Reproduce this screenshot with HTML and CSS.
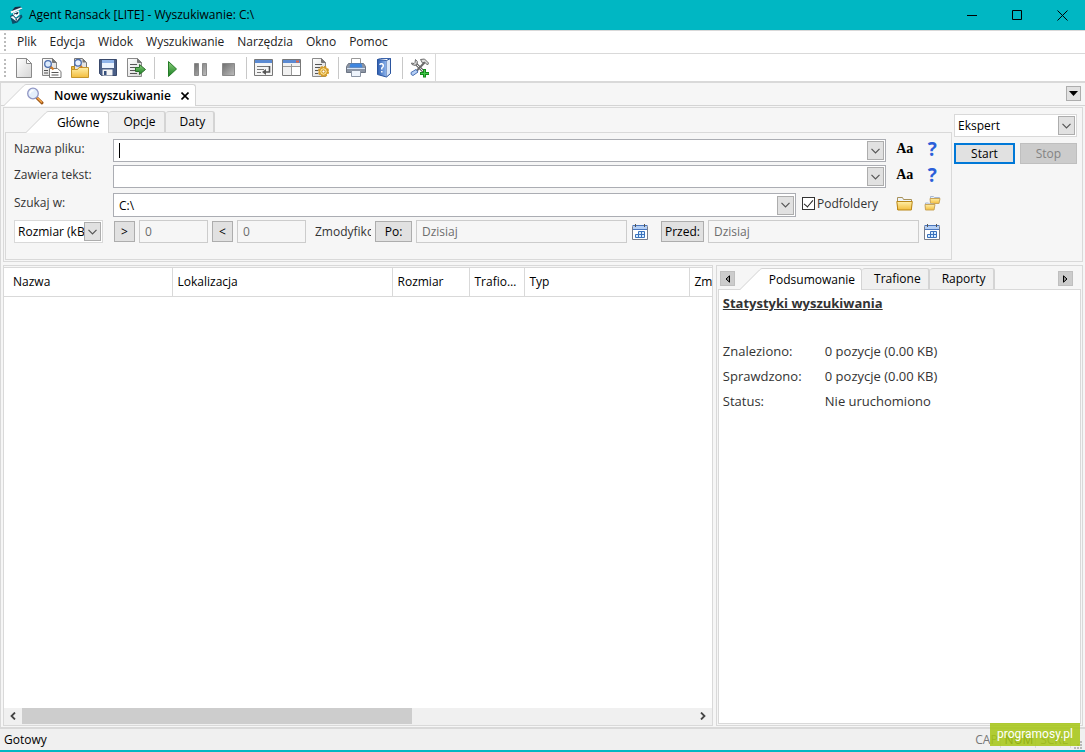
FILE: index.html
```html
<!DOCTYPE html>
<html lang="pl">
<head>
  <meta charset="UTF-8" />
  <meta name="viewport" content="width=device-width, initial-scale=1.0"/>
  <title>Agent Ransack</title>
  <link rel="stylesheet" href="styles.css">
</head>
<body>
  <svg class="defs" aria-hidden="true">
    <defs>
      <linearGradient id="gPage" x1="0" y1="0" x2="1" y2="1"><stop offset="0" stop-color="#fff"/><stop offset="1" stop-color="#d5d5d5"/></linearGradient>
      <linearGradient id="gFolder" x1="0" y1="0" x2="0" y2="1"><stop offset="0" stop-color="#ffefa8"/><stop offset="1" stop-color="#f3bd3c"/></linearGradient>
      <linearGradient id="gGreen" x1="0" y1="0" x2="0" y2="1"><stop offset="0" stop-color="#8ed07c"/><stop offset="1" stop-color="#177f22"/></linearGradient>
      <linearGradient id="gGray" x1="0" y1="0" x2="1" y2="1"><stop offset="0" stop-color="#6e6e6e"/><stop offset="1" stop-color="#bdbdbd"/></linearGradient>
      <linearGradient id="gBlue" x1="0" y1="0" x2="1" y2="0"><stop offset="0" stop-color="#2b5cb0"/><stop offset="1" stop-color="#8fb6ee"/></linearGradient>
      <symbol id="chevron" viewBox="0 0 9 6"><path d="M.5 .8 4.5 4.8 8.5 .8" fill="none" stroke="#555" stroke-width="1.2"/></symbol>
      <symbol id="slope" viewBox="0 0 22 22"><path d="M0 22 20 2Q21 .5 22 .5V22Z" fill="#fff"/><path d="M0 21.5 19.5 2Q21 .5 22 .5" fill="none" stroke="#d4d4d4"/></symbol>
      <symbol id="calendar" viewBox="0 0 16 16">
        <path d="M.5 2.5h15v13H.5z" fill="#fff" stroke="#777d8b"/><path d="M1 2h14v3H1z" fill="#b4cff5"/><path d="M.5 1.500h15M1 5.500h14" stroke="#4a76bd"/>
        <path d="M3.500 0v3M12.500 0v3" stroke="#555"/>
        <path d="M6.500 7.500h6v6h-9v-3h3z" fill="#d6ebff"/><path d="M6.500 7.500h6v6h-9v-3h9M6.500 7.500v6M9.500 7.500v6" fill="none" stroke="#3a72bd"/>
      </symbol>
      <symbol id="lens" viewBox="0 0 18 18">
        <path d="m11 11 5 4.800" stroke="#9b5414" stroke-width="3" stroke-linecap="round"/><path d="m11.500 11 4 4" stroke="#f4a54a" stroke-width="1.600" stroke-linecap="round"/>
        <circle cx="7" cy="6.500" r="5.300" fill="#e4effc" stroke="#9096c4" stroke-width="1.300"/><path d="M4 6.500Q4.500 3.500 7.500 3.500" stroke="#fff" stroke-width="1.500" fill="none"/>
      </symbol>
    </defs>
  </svg>

  <div class="window">
    <header class="titlebar">
      <svg class="app-icon" viewBox="0 0 16 18">
        <path d="M4 4.500 7 1l5.500-.5L14 3 5 6.500z" fill="#1b2c44"/><path d="m2.500 5.500 10.500-4 1.500 1L3.500 7.500z" fill="#f3f8fb"/>
        <path d="m5 7 6-2.500.5 4L8 11.500 5 10z" fill="#fff"/><path d="m5.500 7.800 5-2-.5 2.200-1.800.5-.8-.7-1.400.9z" fill="#17324f"/>
        <path d="m2 10 3-1.500 3 3.500 5.500-3.500 1 2.500-5 5.500-5 1.500z" fill="#0c4d69"/><path d="m2.500 11 2.500-1 3 3 4.500-3-4 5.500z" fill="#eef8fa"/><path d="m7.500 13 1.500 0-1 3.500z" fill="#12304a"/>
      </svg>
      <h1 class="title">Agent Ransack [LITE] - Wyszukiwanie: C:\</h1>
      <button class="win-btn" aria-label="Minimalizuj"><svg width="11" height="11"><path d="M0 5.500h10" stroke="#000"/></svg></button>
      <button class="win-btn" aria-label="Maksymalizuj"><svg width="11" height="11"><path d="M.5 .5h9v9h-9z" fill="none" stroke="#000"/></svg></button>
      <button class="win-btn" aria-label="Zamknij"><svg width="11" height="11"><path d="m.5 .5 10 10M10.500 .5l-10 10" stroke="#000"/></svg></button>
    </header>

    <nav class="menubar">
      <span class="handle"></span>
      <a href="#">Plik</a>
      <a href="#">Edycja</a>
      <a href="#">Widok</a>
      <a href="#">Wyszukiwanie</a>
      <a href="#">Narzędzia</a>
      <a href="#">Okno</a>
      <a href="#">Pomoc</a>
    </nav>

    <div class="toolbar-row">
      <div class="toolbar">
        <span class="handle"></span>
        <button aria-label="Nowy"><svg viewBox="0 0 20 20"><path d="M2.500 .5h10l5 5v14h-15z" fill="url(#gPage)" stroke="#8a8a8a"/><path d="M12.500 .5v5h5z" fill="#fff" stroke="#8a8a8a"/></svg></button>
        <button aria-label="Nowe wyszukiwanie"><svg viewBox="0 0 20 20"><path d="M.5 .5h10l4 4v13H.5z" fill="url(#gPage)" stroke="#858585"/><path d="M10.500 .5v4h4" fill="#777" stroke="#777"/><path d="M2 12.500h4M2 15h4" stroke="#555"/><path d="M7.500 10.500h8l3.500 3v6H7.500z" fill="#fff" stroke="#777"/><path d="M9.500 14.500h7M9.500 17h7" stroke="#555"/><path d="m8.500 8.500 3 3" stroke="#d47a22" stroke-width="2"/><circle cx="6" cy="6" r="3.300" fill="#dcebfd" stroke="#4c6eae" stroke-width="1.300"/></svg></button>
        <button aria-label="Otwórz"><svg viewBox="0 0 20 20"><path d="M4.500 .5h8l4 4v8h-12z" fill="#e4e4e4" stroke="#777"/><path d="M12.500 .5v4h4" fill="#777"/><path d="M1.500 18.500v-10h3v3h13v7z" fill="#e9b942" stroke="#b98a20"/><path d="M1.500 19.500v-8h6l1.500-2h9.500v10z" fill="url(#gFolder)" stroke="#c4952a"/><path d="m10 7 2 2.500" stroke="#d47a22" stroke-width="2"/><circle cx="8" cy="4.800" r="3.300" fill="#e7f1ff" stroke="#4c6eae" stroke-width="1.300"/></svg></button>
        <button aria-label="Zapisz"><svg viewBox="0 0 20 20"><path d="M1.500 1.500h17v16h-15l-2-2z" fill="#4a5f88" stroke="#39496b"/><path d="M4 2h12v8H4z" fill="#eaf3ff"/><path d="M4 2h12v3H4z" fill="#8fb4ea"/><path d="M4.500 11.500h10v6h-10z" fill="#f4f4f4"/><path d="M6 13h2.500v4H6z" fill="#36507d"/></svg></button>
        <button aria-label="Eksportuj"><svg viewBox="0 0 20 20"><path d="M1.500 .5h10l4 4v14h-14z" fill="url(#gPage)" stroke="#8a8a8a"/><path d="M11.500 .5v4h4" fill="#777" stroke="#777"/><path d="M4 6.500h7M4 9.500h6M4 12.500h6M4 15.500h7" stroke="#555"/><path d="M9.500 9.500h4v-3l6 5-6 5v-3h-4z" fill="url(#gGreen)" stroke="#2c6f2c"/></svg></button>
        <span class="sep"></span>
        <button aria-label="Start"><svg viewBox="0 0 20 20"><path d="M6.500 3.500v15l8-7.500z" fill="url(#gGreen)" stroke="#257a28"/></svg></button>
        <button aria-label="Pauza"><svg viewBox="0 0 20 20"><path d="M4.500 5.500h4v12h-4zM12.500 5.500h4v12h-4z" fill="url(#gGray)" stroke="#8a8a8a"/></svg></button>
        <button aria-label="Zatrzymaj"><svg viewBox="0 0 20 20"><path d="M4.500 5.500h12v12h-12z" fill="url(#gGray)" stroke="#8a8a8a"/></svg></button>
        <span class="sep"></span>
        <button aria-label="Zawijaj wiersze"><svg viewBox="0 0 20 20"><path d="M.5 1.500h18v16H.5z" fill="#f5f5f5" stroke="#777"/><path d="M1 2h17v3H1z" fill="#5b8ad2"/><path d="M3 8.500h12M3 11.500h7M3 14.500h4" stroke="#777"/><path d="M15.500 8v6h-4" fill="none" stroke="#555" stroke-width="1.600"/><path d="m12 11-4 3 4 3z" fill="#555"/></svg></button>
        <button aria-label="Układ okna"><svg viewBox="0 0 20 20"><path d="M.5 1.500h18v16H.5z" fill="#f1f1f1" stroke="#777"/><path d="M1 2h17v3H1z" fill="#5b8ad2"/><path d="M14 2.500h3v2h-3z" fill="#e46746"/><path d="M1 8.500h17M9.500 6v11.500" stroke="#999"/><path d="M10 9h8v8h-8z" fill="#fff"/></svg></button>
        <button aria-label="Opcje"><svg viewBox="0 0 20 20"><path d="M2.500 .5h9l4 4v14h-13z" fill="url(#gPage)" stroke="#8a8a8a"/><path d="M11.500 .5v4h4" fill="#777" stroke="#777"/><path d="M5 6.500h7M5 9.500h5M5 12.500h3M5 15.500h3" stroke="#555"/><circle cx="13.500" cy="13.500" r="4.600" fill="#f9dc7c" stroke="#d59a24" stroke-width="2" stroke-dasharray="2.400 1.200"/><circle cx="13.500" cy="13.500" r="3.900" fill="#fbe08a" stroke="#c98d1c"/><circle cx="13.500" cy="13.500" r="1.600" fill="#fff" stroke="#c98d1c"/></svg></button>
        <span class="sep"></span>
        <button aria-label="Drukuj"><svg viewBox="0 0 20 20"><path d="M5.500 .5h9v6h-9z" fill="#fff" stroke="#999"/><path d="M2.500 5.500h15l2 3v6H.5v-6z" fill="#8c95a4" stroke="#6c7584"/><path d="M4.500 5.500h11l1 4h-13z" fill="#3f86df"/><path d="M1 10.500h18" stroke="#d5e3f6"/><path d="M5.500 12.500h9v6h-9z" fill="#eef4fc" stroke="#8b95a5"/></svg></button>
        <button aria-label="Pomoc"><svg viewBox="0 0 20 20"><path d="m3.500 1.500 3-1h10v15l-4 3z" fill="#fff" stroke="#3c65ab"/><path d="M3.500 1.500 12.500 2.500v16.500l-9-2.500z" fill="url(#gBlue)" stroke="#2b559f"/><path d="m12.500 2.500 4-2v15l-4 3.500" fill="#dbe7f8" stroke="#2b559f"/><path d="M6 7Q6 5.500 7.700 5.700T9.300 8Q9.300 9 7.800 10v1.500M7.800 13v1.500" fill="none" stroke="#fff" stroke-width="1.500"/></svg></button>
        <span class="sep"></span>
        <button aria-label="Dodaj narzędzie"><svg viewBox="0 0 20 20"><path d="m5 5 9 9" stroke="#6c6c6c" stroke-width="3"/><path d="m5 5 9 9" stroke="#eee"/><path d="M5.500 1.500Q8.500 3.500 7 6T2 6.500L1.500 5l2.500.5 1-1z" fill="#ddd" stroke="#6c6c6c"/><path d="m15 4-8.500 9" stroke="#6c6c6c" stroke-width="2"/><path d="m10.500 1.500 4-.5 4 4-1 2-3-3-2 1z" fill="#ddd" stroke="#6c6c6c"/><path d="m6 11.500-5 3q-.5 2.500 2 3l5-3.500z" fill="#b4cef5" stroke="#4970b3"/><path d="M14.500 11v8.500M10 15.500h9" stroke="#138a1b" stroke-width="3"/><path d="M14.500 12v6.500M11 15.500h7.500" stroke="#43c84a"/></svg></button>
      </div>
    </div>

    <main class="workspace">
      <div class="doc-tabs">
        <div class="doc-tab">
          <svg class="slope"><use href="#slope"/></svg>
          <div class="doc-tab-body">
            <svg class="lens"><use href="#lens"/></svg>
            <button class="doc-name">Nowe wyszukiwanie</button>
            <button class="doc-close" aria-label="Zamknij kartę"><svg width="8" height="8"><path d="m.5 .5 7 7m0-7-7 7" stroke="#000" stroke-width="1.600"/></svg></button>
          </div>
        </div>
        <button class="tab-list" aria-label="Lista kart"><svg width="9" height="5"><path d="M0 0h9L4.500 5z"/></svg></button>
      </div>

      <section class="search-pane">
        <div class="criteria">
          <div class="tabs">
            <div class="tab active"><svg class="slope"><use href="#slope"/></svg><button>Główne</button></div>
            <div class="tab"><button>Opcje</button></div>
            <div class="tab"><button>Daty</button></div>
          </div>
          <form class="form">
            <div class="row">
              <label class="caption" for="fileName">Nazwa pliku:</label>
              <div class="combo">
                <span class="caret"></span>
                <input id="fileName" type="text">
                <button type="button" class="drop" aria-label="Rozwiń"><svg><use href="#chevron"/></svg></button>
              </div>
              <div class="aside">
                <button type="button" class="case">Aa</button>
                <button type="button" class="help">?</button>
              </div>
            </div>
            <div class="row">
              <label class="caption" for="contains">Zawiera tekst:</label>
              <div class="combo">
                <input id="contains" type="text">
                <button type="button" class="drop" aria-label="Rozwiń"><svg><use href="#chevron"/></svg></button>
              </div>
              <div class="aside">
                <button type="button" class="case">Aa</button>
                <button type="button" class="help">?</button>
              </div>
            </div>
            <div class="row">
              <label class="caption" for="lookIn">Szukaj w:</label>
              <div class="combo">
                <input id="lookIn" type="text" value="C:\">
                <button type="button" class="drop" aria-label="Rozwiń"><svg><use href="#chevron"/></svg></button>
              </div>
              <label class="check"><input type="checkbox" checked>Podfoldery</label>
              <div class="aside folders">
                <button type="button" aria-label="Wybierz folder"><svg width="17" height="15" viewBox="0 0 17 15"><path d="M1.500 13.500v-12h5l1 2h8v8z" fill="#eef4fb" stroke="#a9925a"/><path d="M1.500 5v8.500" stroke="#b98718"/><path d="M.8 5.500h15.500l-1 8.500H1.800z" fill="url(#gFolder)" stroke="#b98718"/></svg></button>
                <button type="button" aria-label="Wybierz foldery"><svg width="17" height="16" viewBox="0 0 17 16"><path d="M6.500 7.500v-6h3l1 1h5v3z" fill="#e5eefb" stroke="#a9b9d3"/><path d="M6 3.500h10l-1 5H6.500z" fill="url(#gFolder)" stroke="#c9a55a"/><path d="M1.500 14v-6h3l1 1h4v4z" fill="#e5eefb" stroke="#a9b9d3"/><path d="M1 9.500h10l-1 5.500H1.500z" fill="url(#gFolder)" stroke="#c9a55a"/></svg></button>
              </div>
            </div>
            <div class="row filters">
              <div class="picker unit">
                <select aria-label="Jednostka"><option>Rozmiar (kB)</option></select>
                <span class="drop"><svg><use href="#chevron"/></svg></span>
              </div>
              <button type="button" class="push sign">&gt;</button>
              <input class="field size" type="text" value="0" aria-label="Rozmiar od" disabled>
              <button type="button" class="push sign">&lt;</button>
              <input class="field size" type="text" value="0" aria-label="Rozmiar do" disabled>
              <span class="modified">Zmodyfikowany</span>
              <button type="button" class="push after">Po:</button>
              <input class="field" type="text" value="Dzisiaj" aria-label="Po dacie" disabled>
              <button type="button" class="cal" aria-label="Kalendarz"><svg><use href="#calendar"/></svg></button>
              <button type="button" class="push before">Przed:</button>
              <input class="field" type="text" value="Dzisiaj" aria-label="Przed datą" disabled>
              <button type="button" class="cal last" aria-label="Kalendarz"><svg><use href="#calendar"/></svg></button>
            </div>
          </form>
        </div>
        <div class="actions">
          <div class="picker">
            <select aria-label="Tryb"><option>Ekspert</option></select>
            <span class="drop"><svg><use href="#chevron"/></svg></span>
          </div>
          <div class="buttons">
            <button class="push start">Start</button>
            <button class="push stop" disabled>Stop</button>
          </div>
        </div>
      </section>

      <div class="panes">
        <section class="results">
          <div class="list">
            <table>
              <colgroup><col class="c-name"><col class="c-place"><col class="c-size"><col class="c-hits"><col class="c-type"><col class="c-date"></colgroup>
              <thead>
                <tr><th>Nazwa</th><th>Lokalizacja</th><th>Rozmiar</th><th>Trafione</th><th>Typ</th><th>Zmodyfikowany</th></tr>
              </thead>
            </table>
          </div>
          <div class="scrollbar">
            <button aria-label="W lewo"><svg width="6" height="8"><path d="M5 .5 1.500 4 5 7.500" fill="none" stroke="#444" stroke-width="1.800"/></svg></button>
            <div class="track"><div class="thumb"></div></div>
            <button aria-label="W prawo"><svg width="6" height="8"><path d="M1 .5 4.500 4 1 7.500" fill="none" stroke="#444" stroke-width="1.800"/></svg></button>
          </div>
        </section>
        <section class="details">
          <div class="tabs">
            <button class="arrow" aria-label="Poprzednia"><svg width="5" height="8"><path d="M4.500 .8v6.400L1 4z" fill="#999" stroke="#000"/></svg></button>
            <div class="tab active"><svg class="slope"><use href="#slope"/></svg><button>Podsumowanie</button></div>
            <div class="tab"><button>Trafione</button></div>
            <div class="tab"><button>Raporty</button></div>
            <button class="arrow right" aria-label="Następna"><svg width="5" height="8"><path d="M.5 .8v6.400L4 4z" fill="#999" stroke="#000"/></svg></button>
          </div>
          <div class="summary">
            <h2>Statystyki wyszukiwania</h2>
            <dl>
              <dt>Znaleziono:</dt><dd>0 pozycje (0.00 KB)</dd>
              <dt>Sprawdzono:</dt><dd>0 pozycje (0.00 KB)</dd>
              <dt>Status:</dt><dd>Nie uruchomiono</dd>
            </dl>
          </div>
        </section>
      </div>
    </main>

    <footer class="statusbar">
      <span class="ready">Gotowy</span>
      <span class="key">CAP</span>
      <span class="key on">NUM</span>
      <span class="key">SCRL</span>
      <svg class="grip" width="9" height="9"><path d="M6 0h2v2H6zM3 3h2v2H3zM6 3h2v2H6zM0 6h2v2H0zM3 6h2v2H3zM6 6h2v2H6z" fill="#b8b8b8"/></svg>
      <span class="badge">programosy.pl</span>
    </footer>
  </div>
</body>
</html>
```
FILE: styles.css
```css
* {
  box-sizing: border-box;
}
body {
  margin: 0;
  font-family: "Open Sans", "Noto Sans", sans-serif;
  font-size: 12px;
  line-height: 16px;
  color: #000;
}
button, input, select {
  font: inherit;
  color: inherit;
  margin: 0;
  padding: 0;
  border: none;
  background: none;
  border-radius: 0;
  min-width: 0;
}
button {
  display: flex;
  align-items: center;
  justify-content: center;
}
input:focus, select:focus {
  outline: none;
}
.defs {
  position: absolute;
  width: 0;
  height: 0;
}
.window {
  display: flex;
  flex-direction: column;
  min-height: 100vh;
  background: #f6f6f6;
  border-bottom: 2px solid #00b7c3;
}

/* title and menu */
.titlebar {
  display: flex;
  align-items: center;
  height: 30px;
  padding-left: 8px;
  background: #00b7c3;
}
.app-icon {
  width: 16px;
  height: 18px;
  margin-right: 5px;
}
.title {
  flex: 1;
  margin: 0;
  font-size: 12px;
  font-weight: normal;
}
.win-btn {
  width: 45px;
  height: 30px;
}
.menubar {
  display: flex;
  align-items: center;
  height: 24px;
  padding-left: 4px;
  background: #fff;
  border-top: 1px solid #d9d9d9;
  border-bottom: 1px solid #d9d9d9;
}
.menubar a {
  padding: 0 7px 0 6px;
  color: #222;
  text-decoration: none;
}
.handle {
  width: 2px;
  height: 18px;
  margin-right: 4px;
  background: repeating-linear-gradient(#bbb 0 2px, transparent 2px 4px);
}
.menubar .handle {
  margin-right: 5px;
}

/* toolbar */
.toolbar-row {
  display: flex;
  height: 29px;
  background: #fff;
  border-bottom: 2px solid #d9d9d9;
}
.toolbar {
  display: flex;
  align-items: center;
  padding: 0 1px 0 4px;
  border-right: 1px solid #d9d9d9;
}
.toolbar button {
  width: 28px;
  height: 26px;
}
.toolbar button svg {
  width: 20px;
  height: 20px;
}
.sep {
  width: 1px;
  height: 22px;
  margin: 0 3px 0 4px;
  background: #c8c8c8;
}

/* document tab */
.workspace {
  flex: 1;
  display: flex;
  flex-direction: column;
  border-left: 1px solid #d9d9d9;
  border-bottom: 2px solid #d9d9d9;
  padding-bottom: 1px;
}
.doc-tabs {
  display: flex;
  align-items: flex-end;
  height: 23px;
  padding-left: 3px;
  border-bottom: 1px solid #d4d4d4;
}
.doc-tab {
  display: flex;
  margin-bottom: -1px;
}
.slope {
  width: 22px;
  height: 22px;
  flex: none;
}
.doc-tab-body {
  display: flex;
  align-items: center;
  height: 22px;
  padding-right: 6px;
  background: #fff;
  border: solid #d4d4d4;
  border-width: 1px 1px 0 0;
  border-radius: 0 3px 0 0;
}
.lens {
  width: 18px;
  height: 18px;
  margin-right: 10px;
}
.doc-name {
  font-weight: 600;
  margin-right: 10px;
}
.tab-list {
  width: 15px;
  height: 15px;
  margin: 0 4px 4px auto;
  background: #e1e1e1;
  border: 1px solid #adadad;
}

/* search form */
.search-pane {
  display: flex;
  margin: 1px 2px 3px;
  padding: 3px 5px 1px 1px;
  border: 1px solid #d9d9d9;
}
.criteria {
  flex: 1;
  min-width: 0;
}
.tabs {
  display: flex;
  align-items: flex-end;
  position: relative;
}
.criteria .tabs {
  padding-left: 21px;
}
.tab {
  display: flex;
}
.tab button {
  height: 21px;
  padding: 0 8px 0 14px;
  background: #f0f0f0;
  border: solid #d4d4d4;
  border-width: 1px 2px 0 0;
  border-radius: 3px 3px 0 0;
}
.tab.active {
  margin-bottom: -1px;
}
.tab.active button {
  height: 22px;
  padding: 0 9px;
  background: #fff;
  border-right-width: 1px;
  border-radius: 0 3px 0 0;
}
.form {
  display: flex;
  flex-direction: column;
  gap: 3px;
  height: 128px;
  padding: 6px 5px 0 8px;
  border: 1px solid #d9d9d9;
}
.row {
  display: flex;
  align-items: center;
  height: 23px;
}
.row:nth-child(3) {
  height: 24px;
  margin-top: 2px;
}
.caption {
  width: 99px;
  align-self: flex-start;
  padding-top: 2px;
  color: #333;
}
.combo {
  flex: 1;
  display: flex;
  align-items: center;
  height: 100%;
  padding: 0 1px 0 5px;
  background: #fff;
  border: 1px solid #abadb3;
}
.combo input {
  flex: 1;
  height: 18px;
}
.caret {
  width: 1px;
  height: 15px;
  background: #000;
}
.drop {
  display: flex;
  align-items: center;
  justify-content: center;
  width: 17px;
  height: 19px;
  background: #e1e1e1;
  border: 1px solid #adadad;
}
.drop svg {
  width: 9px;
  height: 6px;
}
.aside {
  display: flex;
  width: 60px;
  padding: 0 0 4px 5px;
}
.aside button {
  flex: 1;
  height: 20px;
}
.case {
  font-family: "Liberation Serif", serif;
  font-size: 14px;
  font-weight: bold;
}
.help {
  color: #2b5fd9;
  font-size: 19px;
  font-weight: bold;
}
.check {
  display: flex;
  align-items: center;
  width: 90px;
  padding: 0 0 3px 6px;
  color: #333;
}
.check input {
  width: 13px;
  height: 13px;
  margin-right: 2px;
  appearance: none;
  background: #fff;
  border: 1px solid #333;
}
.check input:checked::before {
  content: "";
  display: block;
  width: 4px;
  height: 8px;
  margin: 0 auto;
  border: solid #222;
  border-width: 0 1px 1px 0;
  transform: rotate(40deg);
}
.picker {
  position: relative;
  height: 23px;
  background: #fff;
  border: 1px solid #d9d9d9;
}
.picker select {
  width: 100%;
  height: 21px;
  padding: 0 18px 0 3px;
  appearance: none;
}
.picker .drop {
  position: absolute;
  top: 1px;
  right: 1px;
  pointer-events: none;
}
.unit {
  width: 89px;
  margin-right: 7px;
}
.unit select {
  text-overflow: clip;
}
.filters {
  gap: 4px;
}
.push {
  height: 21px;
  background: #e1e1e1;
  border: 1px solid #adadad;
}
.sign {
  width: 21px;
}
.field {
  flex: 1;
  height: 23px;
  padding: 0 5px;
  color: #6d6d6d;
  background: #f6f6f6;
  border: 1px solid #ccc;
}
.size {
  flex: none;
  width: 69px;
}
.modified {
  width: 56px;
  margin-left: 5px;
  overflow: hidden;
  white-space: nowrap;
  color: #333;
}
.after {
  width: 37px;
}
.before {
  width: 43px;
}
.cal {
  width: 16px;
  margin: 0 9px 0 1px;
}
.cal.last {
  margin-right: 6px;
}
.cal svg {
  width: 16px;
  height: 16px;
}
.actions {
  width: 125px;
  padding: 3px 0 0 2px;
}
.buttons {
  display: flex;
  gap: 5px;
  margin-top: 6px;
}
.start {
  flex: 60;
  border: 2px solid #0078d7;
}
.stop {
  flex: 58;
  color: #838383;
  background: #ccc;
  border-color: #bfbfbf;
}

/* results */
.panes {
  flex: 1;
  display: flex;
  gap: 3px;
  margin: 0 2px;
}
.results {
  flex: 1;
  min-width: 0;
  display: flex;
  flex-direction: column;
  padding-top: 1px;
  border: 1px solid #d9d9d9;
}
.list {
  flex: 1;
  overflow: hidden;
  background: #fff;
  border-top: 1px solid #d9d9d9;
}
table {
  width: 860px;
  table-layout: fixed;
  border-collapse: collapse;
}
th {
  height: 28px;
  padding: 1px 5px 0;
  overflow: hidden;
  text-overflow: ellipsis;
  white-space: nowrap;
  text-align: left;
  font-weight: normal;
  border: solid #d9d9d9;
  border-width: 0 1px 1px 0;
}
th:first-child {
  padding-left: 9px;
}
.c-name {
  width: 168px;
}
.c-place {
  width: 220px;
}
.c-size {
  width: 77px;
}
.c-hits {
  width: 55px;
}
.c-type {
  width: 165px;
}
.scrollbar {
  display: flex;
  height: 17px;
  padding-bottom: 1px;
  background: #f0f0f0;
}
.scrollbar button {
  width: 18px;
}
.track {
  flex: 1;
}
.thumb {
  width: 58%;
  height: 16px;
  background: #cdcdcd;
}

/* summary */
.details {
  flex: 0 0 34%;
  display: flex;
  flex-direction: column;
  padding: 2px 1px 1px;
  border: 1px solid #d9d9d9;
}
.details .tab button {
  padding: 0 7px 0 12px;
}
.details .tab.active button {
  padding: 0 6px 0 7px;
}
.arrow {
  align-self: center;
  width: 15px;
  height: 15px;
  margin: 0 5px 0 2px;
  background: #ccc;
  border: 1px solid #bfbfbf;
}
.arrow.right {
  margin: 0 8px 0 auto;
}
.summary {
  flex: 1;
  padding: 4px;
  background: #fff;
  border: 1px solid #d9d9d9;
  color: #333;
  font-size: 13px;
}
.summary h2 {
  margin: 0 0 27px;
  font-size: 13px;
  line-height: 18px;
  text-decoration: underline;
}
dl {
  display: grid;
  grid-template-columns: 102px 1fr;
  margin: 0;
  line-height: 25px;
}
dd {
  margin: 0;
}

/* status bar */
.statusbar {
  position: relative;
  display: flex;
  align-items: center;
  height: 21px;
  padding: 0 2px 0 4px;
  background: #f0f0f0;
}
.ready {
  flex: 1;
}
.key {
  padding: 0 2px 0 4px;
  color: #777;
  border-right: 1px solid #d9d9d9;
}
.key.on {
  color: #222;
}
.grip {
  align-self: flex-end;
  margin-left: 3px;
}
.badge {
  position: absolute;
  right: 5px;
  bottom: 4px;
  width: 90px;
  height: 23px;
  background: rgba(165, 198, 18, 0.85);
  color: #fff;
  font-family: Roboto, sans-serif;
  font-size: 12px;
  line-height: 22px;
  text-align: center;
}
```
